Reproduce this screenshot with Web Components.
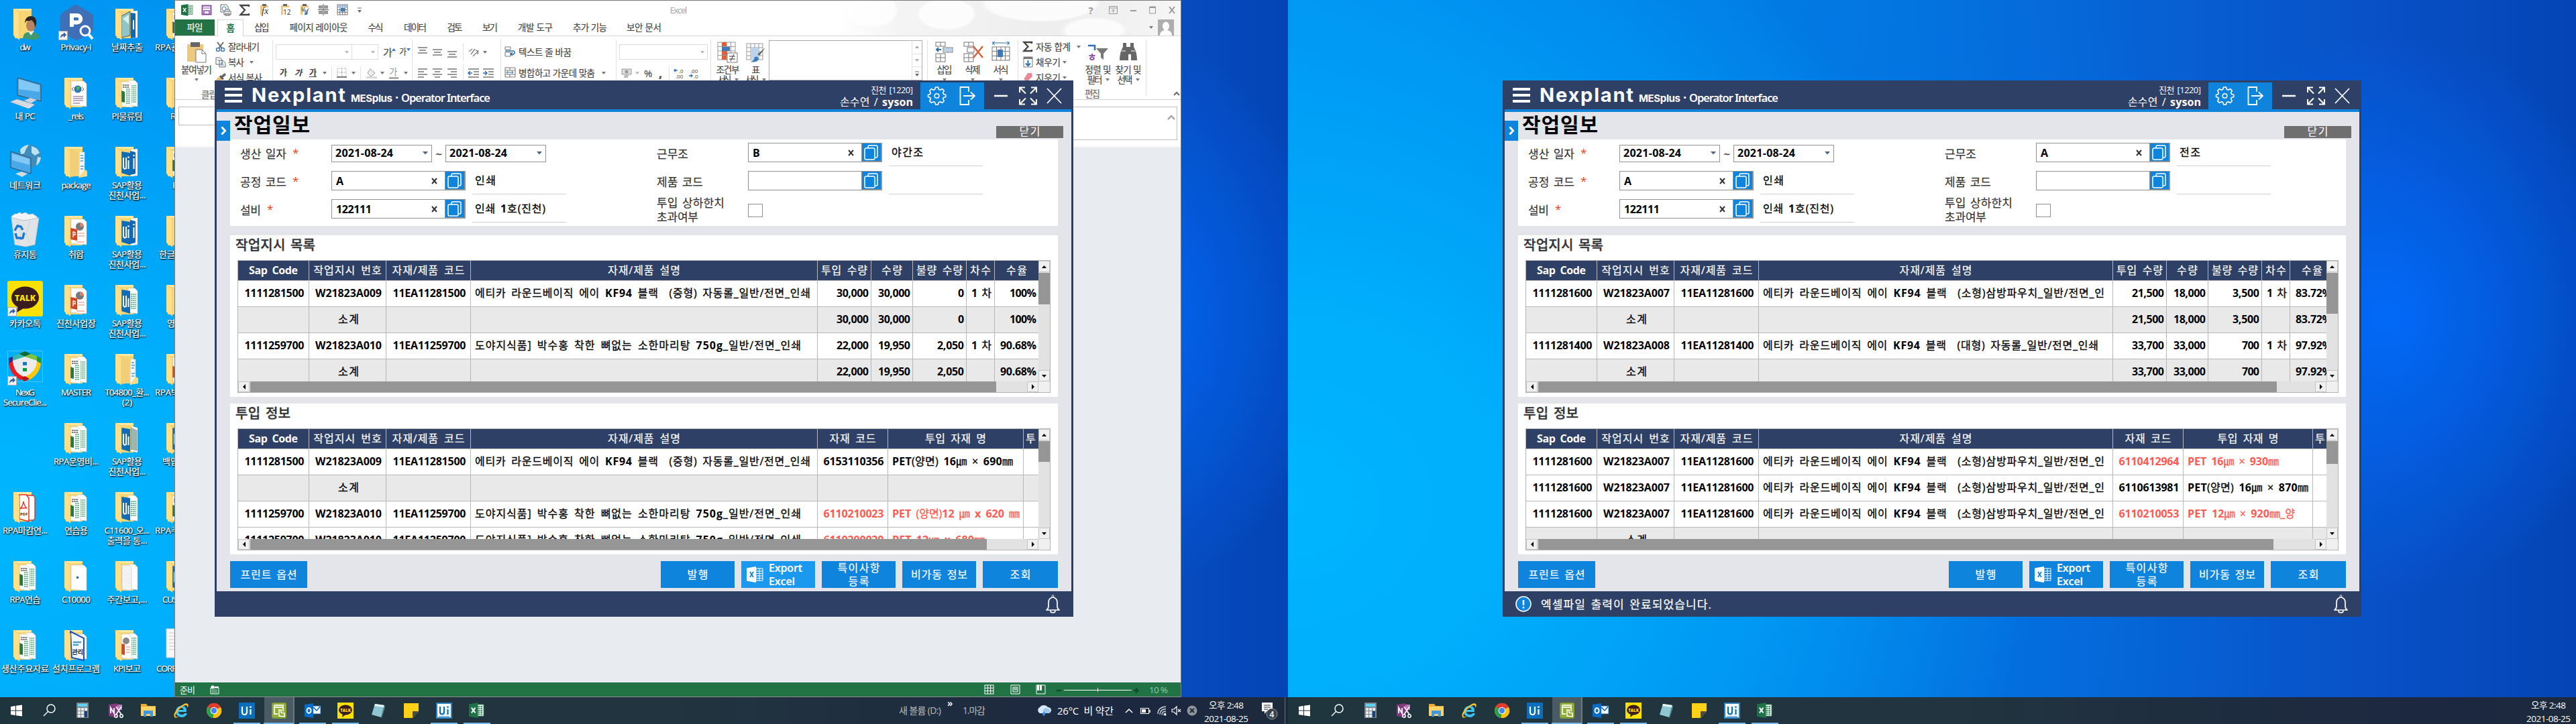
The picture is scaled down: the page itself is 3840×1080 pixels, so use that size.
<!DOCTYPE html>
<html lang="ko">
<head>
<meta charset="utf-8">
<title>Desktop</title>
<style>
html,body{margin:0;padding:0;width:3840px;height:1080px;overflow:hidden;background:#0078d7}
body{font-family:'Open Sans','Noto Sans CJK KR',sans-serif}
.screens{display:flex;width:3840px;height:1080px}
</style>
</head>
<body>
<div class="screens">
  <desk-screen kind="left"></desk-screen>
  <desk-screen kind="right"></desk-screen>
</div>
<script>
/* ---------- helpers ---------- */
class BaseEl extends HTMLElement{
  connectedCallback(){
    if(this.shadowRoot) return;
    this.attachShadow({mode:'open'}).innerHTML=this.render();
  }
}
/* text whose letter-spacing is tuned so that it fills the width w */
class FitText extends HTMLElement{
  connectedCallback(){
    if(this.shadowRoot) return;
    this.attachShadow({mode:'open'}).innerHTML='<style>:host{display:inline-block;flex:none;white-space:pre}</style><slot></slot>';
    const w=+this.getAttribute('w'); if(!w) return;
    const r=document.createRange(); r.selectNodeContents(this);
    const nat=r.getBoundingClientRect().width, n=[...this.textContent].length;
    if(nat){ this.style.letterSpacing=((w-nat)/Math.max(1,n-(n>1?1:0))).toFixed(3)+'px'; this.style.width=w+'px'; }
  }
}
customElements.define('fit-text',FitText);
const T=(t,w,style='')=>`<fit-text w="${w}" style="${style}">${t}</fit-text>`;
/* Hangul at normal weight, Latin letters and digits bold */
const M=(t,w,style='')=>`<fit-text w="${w}" style="${style}">${t.replace(/[A-Za-z0-9][A-Za-z0-9.,%\-]*/g,m=>`<span style="font-weight:700;-webkit-text-stroke:0">${m}</span>`)}</fit-text>`;
const S=(w,h,body,vb)=>`<svg width="${w}" height="${h}" viewBox="${vb||`0 0 ${w} ${h}`}" style="display:block;flex:none;overflow:visible">${body}</svg>`;

/* ---------- desktop icons ---------- */
const folderBack='<path d="M20 13h27v44H22z" fill="#f7d774"/><path d="M20 13h27v3H21z" fill="#ffe9a0"/>';
const folderFront='<path d="M20 13l9 5.500v41L20 53z" fill="#ffe08a"/><path d="M20 13l9 5.500v41" fill="none" stroke="#e8c060" stroke-width=".6"/>';
const page=(x,y,w,h,f='#fff')=>`<path d="M${x} ${y}h${w-4}l4 4v${h-5}l-${w} -2z" fill="${f}" stroke="#c8c8c8" stroke-width=".6"/>`;
const lines=(x,y,n,c,w=9)=>Array.from({length:n},(_,i)=>`<path d="M${x} ${y+i*3}h${w}" stroke="${c}" stroke-width="1.400" stroke-dasharray="2.500 .7"/>`).join('');
const sheetsX=page(39,17,14,40)+lines(43,25,9,'#4fa678',8)+page(29,19,15,39)+lines(31,24,2,'#555',10)+lines(36,30,8,'#4fa678',6)+'<path d="M29 32l5 2v16l-5-1z" fill="#1f7a45"/>';
const ui='<path d="M43 17l10-1v40l-10 1z" fill="#fff"/><path d="M42 19l8 2v32l-8 2z" fill="#1268b0"/><path d="M47.500 30v16" stroke="#fff" stroke-width="2"/><circle cx="47.500" cy="26" r="1.300" fill="#fff"/><path d="M29 20l13 2v34l-13-4z" fill="#0e6cb8"/><path d="M32 29v13q0 4 3 4M36 29v17M39.500 33v13" stroke="#fff" stroke-width="2" fill="none"/><circle cx="39.500" cy="28.500" r="1.300" fill="#fff"/>';
const F=inner=>folderBack+inner+folderFront;
const shortcut='<rect x="11.500" y="46.500" width="13" height="13" fill="#f2f2f2" stroke="#aaa"/><path d="M14 57q0-6 5-6.500v-2.500l4 4-4 4v-2.500q-3 0-5 3.500z" fill="#2f5fa8"/>';
const DI={
 folder:F(page(33,19,18,38)),
 user:folderBack+folderFront+'<path d="M34 57q1-9 9-9h5q9 0 11 8-5 4-14 3z" fill="#3f9a6d"/><path d="M42 46l4 7 5-7z" fill="#e8f2ea"/><ellipse cx="46" cy="38" rx="7" ry="9" fill="#b98560"/><path d="M37 33q1-9 10-9 8 1 7 11l-2 7q0-9-5-12-5 2-8 1l-1 3z" fill="#2b2420"/>',
 privacy:'<path d="M37 7l21 12q4 2 4 5v20q0 3-4 5L40 59q-3 2-6 0L16 49q-3-2-3-5V24q0-3 3-5L33 8q2-1 4-1z" transform="translate(1 0)" fill="#3f70b7"/><path d="M31 40V23h8a5 5 0 0 1 0 10.500h-8" fill="none" stroke="#fff" stroke-width="6"/><circle cx="51" cy="46" r="7" fill="#3f70b7" stroke="#fff" stroke-width="3"/><path d="M56 51l6 7" stroke="#fff" stroke-width="4"/>'+shortcut,
 pc:'<path d="M26 13l35 10v25l-35-9z" fill="#49a9e8" stroke="#445" stroke-width="1"/><path d="M28 15l31 9v10L28 30z" fill="#80c8f5"/><path d="M36 47l9-4 10 3-9 5z" fill="#ccd4da"/><path d="M15 49l10-4 27 8-9 6z" fill="#e6eaec" stroke="#99a" stroke-width=".7"/><path d="M19 49l26 7M22 47l26 7" stroke="#aab" stroke-width=".7"/>',
 net:'<circle cx="44" cy="27" r="17" fill="#3d8ebc"/><path d="M30 17q6-7 13-7l-4 6-3 7-5 1zM47 12q9 2 12 10l-7 4-5-4zM56 28l5 1q-1 8-7 12z" fill="#bfe3ee"/><path d="M16 20l30 10v23l-30-9z" fill="#49a9e8" stroke="#445" stroke-width="1"/><path d="M18 23l26 8v9L18 33z" fill="#80c8f5"/><path d="M23 53l9-3 9 3-8 5z" fill="#d3dadf"/>',
 trash:'<path d="M17 14q5-5 9-4 3-4 6 0l6-2 5 3 6-1 7 5-3 5H18z" fill="#f1f3f4" stroke="#c3c8cc" stroke-width=".7"/><path d="M17 16l19 4 22-4-6 40-14 3-16-3z" fill="#dfe4e7" stroke="#b9c2c8"/><path d="M26 20l5 20-4 14M45 20l-6 20 6 14" stroke="#c9d0d4" fill="none"/><path d="M22 35l4-7 5 1 3 5M23 39l2 7h6M36 38l-2 8-4 1" stroke="#1a78cf" stroke-width="3.400" fill="none"/>',
 talk:'<rect x="11" y="7" width="53" height="53" rx="3" fill="#fbe100"/><ellipse cx="37.500" cy="32" rx="20.500" ry="16.500" fill="#3a1d1e"/><path d="M27 42l-2 12 10-6z" fill="#3a1d1e"/><text x="37.500" y="36.500" font-family="Open Sans" font-weight="800" font-size="12" fill="#fbe100" text-anchor="middle" textLength="31">TALK</text>'+shortcut,
 shield:'<rect x="11.500" y="8.500" width="52" height="46" fill="none" stroke="#4ac0ff"/><path d="M37 10L13 20q0 26 24 33 24-7 24-33z" fill="#ececec"/><path d="M37 9l-9 4 9 4 9-4z" fill="#0b6b3a"/><path d="M28 13l-9 3v7l18-6z" fill="#35b8b0"/><path d="M46 13l9 3v7l-18-6z" fill="#7dc242"/><path d="M19 17l-6 2v10l6-5z" fill="#2b2e83"/><path d="M55 17l6 2v10l-6-5z" fill="#139a48"/><path d="M13 27q2 17 18 25l5-5Q21 42 19 24z" fill="#ec1c24"/><path d="M61 27q-2 17-18 25l-6-5q17-7 18-23z" fill="#fdc70c"/><path d="M31 50l6-4 7 4-7 4z" fill="#b5121b"/><rect x="34" y="25" width="6" height="5" fill="#1577c2"/><rect x="34" y="34" width="6" height="5" fill="#0a9a4a"/>'+shortcut,
 rels:F(page(30,18,23,39)+'<circle cx="40" cy="30" r="5.500" fill="#2b76b8"/><path d="M38 27q4-3 5 1l-4 5z" fill="#55b84d"/>'+'<path d="M34 27l-3 3 3 3M46 27l3 3-3 3" stroke="#666" fill="none"/>'+'<path d="M33 41h15M33 44h15M33 47h15M33 51h10" stroke="#758" stroke-width="1"/>'),
 pack:F('<path d="M43 21h7v34l-8 4z" fill="#f4f6f8" stroke="#ccc" stroke-width=".5"/><path d="M44 26h4M44 30h5M44 34h4M44 42h5M44 46h4" stroke="#4b9ad6" stroke-width="1.500"/><path d="M29 17l12 4v35l-11 2z" fill="#f0cf78"/><path d="M50 47l4 2v8l-13 2z" fill="#f9db82"/>'),
 ppt:F(page(30,18,23,39)+'<circle cx="43" cy="29" r="6" fill="#777"/><path d="M43 29v-6a6 6 0 0 1 6 6z" fill="#e2836d"/><path d="M29 31l10 2v17l-10-2z" fill="#d04626"/><path d="M41 39h9M41 43h9M38 52h12" stroke="#e2836d"/><path d="M33 45v-8l3 .5v4l-3-.5" fill="none" stroke="#fff" stroke-width="1.300"/>'),
 xl:F(sheetsX),
 ui:F(ui),
 photo:F('<path d="M43 17l10-1v40l-10 1z" fill="#fff"/><path d="M43 19l7 1v36l-7 1z" fill="#1268b0"/><path d="M47 30v14" stroke="#fff" stroke-width="2"/>'+'<path d="M29 24l13-7v36l-13 3z" fill="#8fc6c9" stroke="#555"/><path d="M31 28l9-6v14z" fill="#d7efef"/>'),
 uip:F('<path d="M44 18l9 2v37l-9-2z" fill="#fff"/><path d="M43 20l9 4v30l-9-2z" fill="#9ab7b3" stroke="#777" stroke-width=".5"/><path d="M29 20l13 2v34l-13-4z" fill="#0e6cb8"/><path d="M32 29v13q0 4 3 4M36 29v17M39.500 33v13" stroke="#fff" stroke-width="2" fill="none"/>'),
 uix:F(page(39,18,14,39)+lines(43,27,8,'#4fa678',8)+'<path d="M29 20l13 2v34l-13-4z" fill="#0e6cb8"/><path d="M32 29v13q0 4 3 4M36 29v17M39.500 33v13" stroke="#fff" stroke-width="2" fill="none"/>'),
 pdf:F('<rect x="36" y="18" width="16" height="37" rx="4" fill="#fff" stroke="#e3342b" stroke-width="1.500"/><path d="M29 17h10l4 5v35l-14-4z" fill="#fff" stroke="#e3342b" stroke-width="1.500"/><path d="M30 38q4-4 5-11 1 7 5 10-6-1-10 1z" fill="none" stroke="#e3342b" stroke-width="1.500"/><text x="30" y="48" font-size="6" font-weight="700" fill="#333" font-family="Open Sans">PDF</text>'),
 blank:F(page(30,19,23,39)+'<rect x="38" y="36" width="3" height="3" fill="#2f5f95"/>'),
 docs:F(page(39,18,14,39)+page(30,19,14,39,'#f3f3f3')+'<path d="M33 26l8 8M33 32l9 9M33 38l9 9" stroke="#ddd" stroke-width=".6"/>'),
 setup:F(page(36,19,17,38)+'<path d="M29 15l20 10v33l-18-4z" fill="#f5f8fb" stroke="#1f4fb0" stroke-width="2"/><path d="M33 31h12M33 35h8" stroke="#4ca0c9" stroke-width="2.500"/><text x="31.500" y="49" font-size="9" font-weight="700" fill="#222" font-family="Noto Sans CJK KR">관리</text>'),
 kpi:F(page(40,18,13,39)+lines(43,25,9,'#4fa678',8)+page(29,19,15,38)+'<circle cx="36" cy="29" r="5" fill="#888"/><path d="M29 33l5 1v16l-5-1z" fill="#d04626"/><path d="M36 38h6M36 42h6M36 46h6" stroke="#e2836d"/>'),
 doc:'<path d="M20 11h30v43H20z" fill="#f7f7f7" stroke="#ccc"/><path d="M24 17h22M24 22h22M24 27h22M24 32h22M24 37h22M24 42h22" stroke="#c9c9c9"/>'
};
class DeskIcon extends BaseEl{
  render(){
    const k=this.getAttribute('kind'), rows=(this.getAttribute('label')||'').split('|').map(s=>s.split('~'));
    const off=this.getAttribute('off');
    return `<style>:host{display:flex;flex-direction:column;width:76px;height:103px;overflow:visible}
    .l{display:flex;flex-direction:column;align-items:${off?'flex-start':'center'};width:75px;margin-left:${off||0}px;font:400 13px/15px 'Open Sans','Noto Sans CJK KR',sans-serif;color:#fff;-webkit-text-stroke:.2px #fff;text-shadow:1px 1px 2px #000,0 1px 2px rgba(0,0,0,.8);margin-top:1px}</style>
    ${k?S(76,62,DI[k]):''}<div class="l">${rows.map(r=>r[0]?T(r[0],r[1]):'').join('')}</div>`;
  }
}
customElements.define('desk-icon',DeskIcon);

class IconGrid extends BaseEl{
  render(){
    const sa='SAP활용~45|진천사업...~56';
    const c=[
     [['user','dw~16'],['pc','내 PC~30'],['net','네트워크~47'],['trash','휴지통~35'],['talk','카카오톡~47'],['shield','NexG~29|SecureClie...~65'],['',''],['pdf','RPA마감연...~67'],['xl','RPA연습~46'],['xl','생산주요자료~71']],
     [['privacy','Privacy-i~46'],['rels','_rels~23'],['pack','package~44'],['ppt','취합~23'],['ppt','진천사업장~59'],['xl','MASTER~45'],['xl','RPA운영비...~67'],['xl','연습용~35'],['blank','C10000~43'],['setup','설치프로그램~71']],
     [['photo','날짜추출~47'],['xl','PI물류팀~46'],['ui',sa],['ui',sa],['uix',sa],['pack','T04800_환...~66|(2)~15'],['uip',sa],['uix','C11600_오...~68|출력을 통...~60'],['docs','주간보고,...~60'],['kpi','KPI보고~41']],
     [['xl','RPA관~36','3'],['folder','R~8','26'],['xl','E~7','29'],['folder','한글~24','9'],['folder','영~12','21'],['ppt','RPA박~36','3'],['uip','백업~24','14'],['xl','RPA주~36','3'],['ui','CUS~23','14'],['doc','CORP~31','5']]
    ];
    return `<style>:host{display:flex;width:304px;height:1030px}.c{display:flex;flex-direction:column;width:76px}</style>`+
      c.map(col=>`<div class="c">${col.map(i=>`<desk-icon kind="${i[0]}" label="${i[1]}" ${i[2]?`off="${i[2]}"`:''}></desk-icon>`).join('')}</div>`).join('');
  }
}
customElements.define('icon-grid',IconGrid);

/* ---------- task bar ---------- */
const excelIco=(s=1)=>`<g transform="scale(${s})"><path d="M12 3h11v18H12z" fill="#fff" stroke="#217346"/><path d="M14 6h7M14 9h7M14 12h7M14 15h7M14 18h7" stroke="#217346" stroke-width="1.800" stroke-dasharray="3 1"/><path d="M0 2.500L14 0v24L0 21.500z" fill="#1e7145"/><path d="M4 8l6 8M10 8l-6 8" stroke="#fff" stroke-width="2"/></g>`;
const TB={
 win:'<path d="M3 6l7-1v6.500H3zM11 4.800L20 3.500v8h-9zM3 12.500h7V19l-7-1zM11 12.500h9v8l-9-1.300z" fill="#fff"/>',
 search:'<circle cx="14" cy="9" r="6" fill="none" stroke="#fff" stroke-width="1.500"/><path d="M10 13l-7 7" stroke="#fff" stroke-width="1.500"/>',
 calc:'<rect x="3" y="0" width="18" height="23" fill="#7d858f"/><rect x="5" y="2" width="14" height="4" fill="#5ed3f5"/><path d="M5 8h4v4H5zM10 8h4v4h-4zM15 8h4v4h-4zM5 13h4v4H5zM10 13h4v4h-4zM5 18h4v4H5zM10 18h4v4h-4z" fill="#e8eaec"/><path d="M15 13h4v9h-4z" fill="#15447c"/>',
 one:'<path d="M2 3l13-2v22L2 20z" fill="#80397b"/><path d="M15 3h7v8h-7z" fill="#b977b4"/><path d="M5 16V8l5 8V8" stroke="#fff" stroke-width="1.800" fill="none"/><path d="M13 6l8 12M21 6l-8 12" stroke="#f3e8f2" stroke-width="2"/><circle cx="13" cy="20" r="2.200" fill="none" stroke="#fff" stroke-width="1.500"/><circle cx="21" cy="20" r="2.200" fill="none" stroke="#fff" stroke-width="1.500"/>',
 dir:'<path d="M1 2h8l2 3h12v15H1z" fill="#e6a93a"/><path d="M1 6h22v14H1z" fill="#ffd363"/><path d="M5 12h14v9h-4v-4h-6v4H5z" fill="#3f98e0"/>',
 ie:'<path d="M20 14H8q1 4 5 4 3 0 4-2h4q-2 6-8.500 6Q4 21 4 13 5 5 12.500 5 21 5 20 14zM8 11h8q-1-3-4-3-3 0-4 3z" fill="#3cc0f0"/><path d="M2 22Q-1 16 9 7 19-1 22 2q2 2-1 6 1-4-2-4Q12 5 6 14q-4 6-2 7 2 1 5-1-4 4-7 2z" fill="#f7c231"/>',
 chrome:'<circle cx="12" cy="12" r="11" fill="#fbc116"/><path d="M12 12L2.500 6.500A11 11 0 0 1 22 7z" fill="#e33b2e"/><path d="M12 12L2.500 6.500A11 11 0 0 0 11 23z" fill="#2aa14c"/><path d="M12 12l10-5A11 11 0 0 1 11 23z" fill="#fbc116"/><circle cx="12" cy="12" r="5.300" fill="#fff"/><circle cx="12" cy="12" r="4.200" fill="#4285f4"/>',
 ui:'<rect x="0" y="0" width="24" height="24" fill="#0a6ebd"/><path d="M5 6v8q0 4 3.500 4t3.500-4V6M17.500 10v8" stroke="#fff" stroke-width="2.200" fill="none"/><rect x="16.300" y="5.500" width="2.400" height="2.400" fill="#fff"/>',
 green:'<rect x="1" y="0" width="22" height="24" rx="3" fill="#7e9a2e"/><rect x="2" y="1" width="20" height="21" rx="2" fill="#93ad3c"/><path d="M5 4h13v9M5 4v13h5M5 7h13" stroke="#f2f5e2" stroke-width="1.800" fill="none"/><path d="M12 20V11h3v4l5 1v5z" fill="none" stroke="#fff" stroke-width="1.500"/>',
 outlook:'<path d="M12 5h12v12H12z" fill="#f4f8fc" stroke="#0a64ad"/><path d="M13 7l5 5 5-6" stroke="#0a64ad" stroke-width="1.500" fill="none"/><path d="M0 3l13-2v22L0 21z" fill="#0a6cc4"/><ellipse cx="6.500" cy="12" rx="3" ry="3.800" fill="none" stroke="#fff" stroke-width="2"/>',
 talk:'<rect width="24" height="24" fill="#fbe100"/><ellipse cx="12" cy="11" rx="10" ry="7.500" fill="#3a1d1e"/><path d="M8 16l-1 6 5-4z" fill="#3a1d1e"/><text x="12" y="13.500" font-size="6" font-weight="800" fill="#fbe100" text-anchor="middle" font-family="Open Sans">TALK</text>',
 note:'<path d="M7 2l14 2-5 18-14-4z" fill="#8ec7d1"/><path d="M7 2l14 2-1 3-14-2z" fill="#e6f2f4"/><path d="M16 22l5-18 1 3-5 16z" fill="#4f8791"/>',
 sticky:'<path d="M1 1h22v12L14 23H1z" fill="#fcd116"/><path d="M23 13h-9v10z" fill="#4a4a43"/>',
 uiw:'<rect x="1" y="1" width="22" height="22" fill="#fff" stroke="#2b84c6" stroke-width="2"/><path d="M6 6v8q0 3.500 3 3.500t3-3.500V6M17.500 10v8" stroke="#0a6ebd" stroke-width="2.200" fill="none"/><rect x="16.300" y="5.500" width="2.400" height="2.400" fill="#0a6ebd"/><path d="M4 21h16" stroke="#0a6ebd"/>',
 excel:excelIco(.96)
};
class TaskBar extends BaseEl{
  render(){
    const left=this.getAttribute('kind')==='left';
    const on={ui:1,green:2,outlook:1,talk:1,uiw:1,excel:1};
    const items=['win','search','calc','one','dir','ie','chrome','ui','green','outlook','talk','note','sticky','uiw','excel'];
    const tray=left?`
      ${T('새 볼륨 (D:)',63,'color:#b4bbc0;margin-right:9px')}${T('»',9,'color:#fff;font-weight:600;font-size:15px;margin:-24px 14px 0 0')}${T('1.마감',34,'color:#b4bbc0;margin-right:76px')}
      ${S(22,20,'<path d="M5 14a5 5 0 0 1 0-9 7 6 0 0 1 12 0 4.500 4.500 0 0 1 1 9z" fill="#d8e9f8"/><path d="M12 14a4 4 0 0 1 4-7 4 4 0 0 1 3 7z" fill="#9cc8ee"/><path d="M11 11q4 5 0 7-4-2 0-7z" fill="#2f8fe8"/>')}
      ${T('26°C  비 약간',84,'color:#fff;font-size:15px;margin-left:9px;margin-right:16px')}
      ${S(14,20,'<path d="M2 13l5-5 5 5" stroke="#fff" stroke-width="1.500" fill="none"/>')}
      <i style="width:9px"></i>${S(18,20,'<rect x="1.500" y="6.500" width="12" height="8" fill="none" stroke="#fff"/><rect x="3" y="8" width="6" height="5" fill="#fff"/><path d="M15 9v4" stroke="#fff" stroke-width="1.500"/>')}
      <i style="width:8px"></i>${S(16,20,'<path d="M1 15Q1 5 13 4M4 16Q4 8 13 7.500M7 16.500Q7 11 13 11M10 17q0-3 3-3" stroke="#cfd6da" fill="none" stroke-width="1.300"/><circle cx="12" cy="16" r="1.500" fill="#fff"/>')}
      <i style="width:4px"></i>${S(18,20,'<path d="M2 8h3l4-4v12l-4-4H2z" fill="none" stroke="#fff" stroke-width="1.200"/><path d="M11 8l4 4M15 8l-4 4" stroke="#fff" stroke-width="1.200"/>')}
      <i style="width:6px"></i>${S(16,20,'<circle cx="8" cy="10" r="7.500" fill="#8d949b"/><path d="M5 7l6 6M11 7l-6 6" stroke="#222b3a" stroke-width="2"/>')}
      <i style="width:10px"></i>`:'';
    return `<style>:host{display:flex;width:1920px;height:40px;background:linear-gradient(90deg,#1f353d 0,#22343f 50%,#1c2740 90%,#1d2a3c 100%);font:400 14px/18px 'Open Sans','Noto Sans CJK KR',sans-serif;color:#fff}
    .b{width:49px;height:40px;display:flex;flex-direction:column;align-items:center;box-sizing:border-box;padding-top:8px}
    .b i{display:block;width:40px;height:2px;background:#76b9ed;margin-top:6px}.b.act{width:45px;background:#4a5b63;margin:0 2px;border-right:2px solid #6a787f}.b.act i{width:45px}
    .tray{margin-left:auto;display:flex;align-items:center;height:40px}.ck{display:flex;flex-direction:column;align-items:center;height:40px;padding-top:2px;box-sizing:border-box;line-height:20px;font-size:13.500px}
    .nt{width:34px;margin-left:15px}.end{border-left:1px solid #66707c;height:40px;width:4px;margin-left:5px}</style>
    ${items.map(n=>`<div class="b ${on[n]===2?'act':''}">${S(24,24,TB[n])}${on[n]?'<i></i>':''}</div>`).join('')}
    <div class="tray">${tray}<div class="ck" style="${left?'':'margin-right:8px'}">${T('오후 2:48',52)}${T('2021-08-25',66)}</div>
    ${left?`<div class="nt">${S(34,34,'<path d="M5 5h16v13h-9l-3 4v-4H5z" fill="#fff"/><path d="M8 9h10M8 12h10M8 15h6" stroke="#223" stroke-width="1.200"/><circle cx="20" cy="22" r="8" fill="#3a424b" stroke="#8c9298"/><text x="20" y="26.500" text-anchor="middle" font-size="12" fill="#fff" font-family="Open Sans" font-weight="600">4</text>')}</div><div class="end"></div>`:''}</div>`;
  }
}
customElements.define('task-bar',TaskBar);

/* ---------- Excel window ---------- */
const dn='<path d="M0 0h6l-3 4z" fill="#777"/>';
const arrow=(st='')=>`<svg width="6" height="4" style="display:block;flex:none;${st}">${dn}</svg>`;
const grid=(x,y,w,h,c,r,col='#777')=>{let s=`<rect x="${x}" y="${y}" width="${w}" height="${h}" fill="none" stroke="${col}"/>`;for(let i=1;i<c;i++)s+=`<path d="M${x+w*i/c} ${y}v${h}" stroke="${col}"/>`;for(let i=1;i<r;i++)s+=`<path d="M${x} ${y+h*i/r}h${w}" stroke="${col}"/>`;return s};
const clip='<path d="M3 2h12v14H3z" fill="#edc87e"/><rect x="6" y="0" width="6" height="3" fill="#666"/><path d="M6 5h10v12H6z" fill="#fff"/>';
class ExcelWindow extends BaseEl{
  render(){
    const qat=[
      S(18,18,excelIco(.74)),
      S(16,16,'<path d="M1.500 1.500h13v13h-13z" fill="#fff" stroke="#8a4fa8" stroke-width="2"/><path d="M4 9h8v5H4z" fill="#fff" stroke="#8a4fa8" stroke-width="1.500"/><path d="M3 5h10" stroke="#8a4fa8"/>'),
      S(18,18,'<path d="M1 1h8l3 3v8H1z" fill="#fff" stroke="#666"/><circle cx="6" cy="7" r="3" fill="none" stroke="#3d7ab8"/><path d="M6 11h10v5H6zM8 8h6v3M8 14h6v3H8z" fill="#fff" stroke="#666"/>'),
      S(18,18,'<path d="M15 4V2H2.500l6.500 7-6.500 7H15v-2" fill="none" stroke="#444" stroke-width="2.300"/>'),
      S(18,18,clip+'<text x="5" y="15" font-size="14" font-style="italic" font-family="Liberation Serif" fill="#333">fx</text>'),
      S(18,18,clip+'<text x="6" y="16" font-size="10" font-family="Open Sans" fill="#333">12</text>'),
      S(18,18,clip+'<text x="4" y="12" font-size="9" font-family="Open Sans" fill="#333">%</text><path d="M16 5l-5 6 2 3z" fill="#777"/><path d="M9 16q0-4 3-4l2 2q-1 3-5 2z" fill="#3d7ab8"/>'),
      S(18,18,'<path d="M2 2h6v5H2zM10 2h6v5h-6zM2 10h6v5H2zM10 10h6v5h-6z" fill="#999"/><path d="M9 0v17M1 8.500h16" stroke="#555"/>'),
      S(18,18,grid(1,1,15,15,4,4)+'<path d="M6 6h6v5H6z" fill="#3d7ab8"/><path d="M2 2h13v3H2z" fill="#a9c6e4"/>')];
    const qx=[270,300,328,356,385,416,445,472.500,501.500];
    let cur=261, q='';
    qat.forEach((a,i)=>{const w=i===1?16:18;q+=`<i style="width:${qx[i]-cur}px"></i>${a}`;cur=qx[i]+w;});
    const tabs=[['삽입',379,22.500],['페이지 레이아웃',431.500,87],['수식',548.500,23],['데이터',602,34],['검토',666.500,23],['보기',719,23],['개발 도구',772,52],['추가 기능',854,51],['보안 문서',934,52]];
    let tc=363,tt='';
    tabs.forEach(t=>{tt+=`<i style="width:${t[1]-tc}px"></i>${T(t[0],t[2])}`;tc=t[1]+t[2];});
    const al=(k)=>S(16,16,k==='l'?'<path d="M1 2h14M1 6h9M1 10h14M1 14h9" stroke="#777" stroke-width="1.300"/>':k==='c'?'<path d="M1 2h14M4 6h8M1 10h14M4 14h8" stroke="#777" stroke-width="1.300"/>':k==='r'?'<path d="M1 2h14M6 6h9M1 10h14M6 14h9" stroke="#777" stroke-width="1.300"/>':k==='t'?'<path d="M1 1h14M3 5h10M1 9h14" stroke="#777" stroke-width="1.300"/>':k==='m'?'<path d="M1 4h14M3 8h10M1 12h14" stroke="#777" stroke-width="1.300"/>':'<path d="M1 7h14M3 11h10M1 15h14" stroke="#777" stroke-width="1.300"/>');
    const g=w=>`<i style="width:${w}px"></i>`;
    const ind=(d)=>S(18,16,`<path d="M1 2h16M9 6h8M9 10h8M1 14h16" stroke="#777" stroke-width="1.300"/><path d="${d?'M1 8h6M4 5l3 3-3 3':'M7 8H1M4 5L1 8l3 3'}" stroke="#2f6fb0" stroke-width="1.500" fill="none"/>`);
    const big=(x,w,ico,a,aw,b,bw)=>`<div class="big" style="width:${w}px;margin-left:${x}px">${ico}${T(a,aw,'margin-top:2px')}${b?`<div class="r" style="height:14px">${T(b,bw)}${arrow('margin-left:4px')}</div>`:arrow('margin-top:5px')}</div>`;
    return `<style>
    :host{display:flex;flex-direction:column;box-sizing:border-box;width:1501px;height:1040px;background:#e8ebf0;border:1px solid #7d7d7d;border-top:1px solid #777;border-bottom:1px solid #8d8d8d;font:400 13.500px/16px 'Open Sans','Noto Sans CJK KR',sans-serif;color:#444;overflow:hidden}
    i{display:block;flex:none}.r{display:flex;align-items:center;flex:none}
    .top{display:flex;flex-direction:column;height:53px;flex:none;background:#fff;border-bottom:1px solid #d5d5d5;box-sizing:border-box;width:1499px}
    .title{height:28px;display:flex;align-items:center}.tabs{height:24px;display:flex;align-items:center}
    .tabs,.rib{-webkit-text-stroke:.15px #444}
    .file{width:59px;height:24px;background:#217346;color:#fff;-webkit-text-stroke:.15px #fff;display:flex;align-items:center;justify-content:center;margin-right:4px}
    .home{width:39px;height:25px;box-sizing:border-box;border:1px solid #d5d5d5;border-bottom:0;background:#fff;color:#217346;display:flex;align-items:center;justify-content:center;font-weight:600;-webkit-text-stroke:0}
    .rib{height:94px;flex:none;background:#fff;border-bottom:1px solid #d0d0d0;display:flex;align-items:flex-start}
    .sep{width:1px;background:#e1e1e1;height:62px;margin-top:5px;flex:none}
    .big{display:flex;flex-direction:column;align-items:center;padding-top:8px;box-sizing:border-box;flex:none}
    .col{display:flex;flex-direction:column;padding-top:4px;flex:none}.col .r{height:23px}
    .box{border:1px solid #dcdcdc;height:23px;box-sizing:border-box;display:flex;align-items:center;justify-content:flex-end;padding-right:4px;flex:none}
    .two{display:flex;flex-direction:column;flex:none}.two .r{height:31px}
    .fx{height:70px;background:#fff;flex:none;display:flex;padding:10px 5px 0 5px;box-sizing:border-box;justify-content:space-between}
    .nb{width:110px;height:28px;border:1px solid #bdbdbd;box-sizing:border-box}.fb{width:1200px;height:50px;border:1px solid #bdbdbd;box-sizing:border-box;display:flex;justify-content:flex-end;padding:10px 2px}
    .status{height:21px;background:#217346;margin-top:auto;display:flex;align-items:center;color:#fff;padding-left:7px}
    .gal{width:229px;height:60px;border:1px solid #ababab;box-sizing:border-box;display:flex;justify-content:flex-end;flex:none;margin-top:6px}
    .gs{width:14px;border-left:1px solid #e1e1e1;display:flex;flex-direction:column}.gs div{flex:1;display:flex;align-items:center;justify-content:center;border-bottom:1px solid #e1e1e1}
    </style>
    <div class="top" style="background:radial-gradient(ellipse 40px 26px at 1038px 14px,rgba(255,255,255,.8) 90%,transparent),radial-gradient(ellipse 44px 24px at 1150px 20px,rgba(255,255,255,.8) 90%,transparent),radial-gradient(ellipse 90px 30px at 1290px 2px,rgba(255,255,255,.8) 90%,transparent),radial-gradient(ellipse 50px 20px at 1370px 44px,rgba(255,255,255,.8) 80%,transparent),linear-gradient(90deg,#fff 0,#fff 990px,#f4f4f4 1080px,#eee 1300px,#f0f0f0 1400px,#f6f6f6 1499px)">
      <div class="title">${q}${g(12)}${S(8,12,'<path d="M1 3h6" stroke="#666"/><path d="M1 6h6l-3 4z" fill="#666"/>')}
        ${g(459)}${T('Excel',26,'color:#a5a5a5')}${g(1621-1023)}
        <div class="r">${T('?',8,'color:#999;font-weight:700;font-size:15px')}${g(20)}${S(16,16,'<path d="M2.500 2.500h12v11h-12zM2 5h12M8.500 12V7M6 9.500l2.500-2.500 2.500 2.500" fill="none" stroke="#999"/>')}${g(14)}${S(16,16,'<path d="M4 9h9" stroke="#999" stroke-width="2"/>')}${g(13)}${S(16,16,'<path d="M3.500 3h9v10h-9z" fill="none" stroke="#999"/><path d="M3 4h10" stroke="#999" stroke-width="2"/>')}${g(14)}${S(14,16,'<path d="M3 3l8 10M11 3L3 13" stroke="#999" stroke-width="2"/>')}</div>
      </div>
      <div class="tabs"><div class="file">${T('파일',24)}</div><div class="home">${T('홈',12)}</div>${tt}${g(1713-986)}${arrow()}${g(7)}${S(24,24,'<rect width="24" height="24" fill="#aeaeae"/><ellipse cx="12" cy="10" rx="5" ry="6.500" fill="#fff"/><path d="M3 24q0-7 7-8h4q7 1 7 8z" fill="#fff"/>')}</div>
    </div>
    <div class="rib">
      <div class="big" style="width:50px;margin-left:7px">${S(30,32,'<path d="M1 4h24v26H1z" fill="#edc87e"/><path d="M6 1h14v7H6z" fill="#666"/><path d="M14 12h9l6 6v13H14z" fill="#fff" stroke="#777"/><path d="M23 12v6h6" fill="none" stroke="#777"/>')}${T('붙여넣기',46,'margin-top:2px')}${arrow('margin-top:5px')}
        <div style="display:flex;padding:12px 0 0 38px;color:#777">${T('클립',24)}</div></div>
      <div class="col" style="width:82px;margin-left:3px;margin-right:3px">
        <div class="r">${S(16,16,'<path d="M3 1l7 9M12 1L5 10" stroke="#666" stroke-width="2"/><circle cx="4" cy="12" r="2.500" fill="none" stroke="#3d7ab8" stroke-width="1.500"/><circle cx="11" cy="12" r="2.500" fill="none" stroke="#3d7ab8" stroke-width="1.500"/>')}${g(3)}${T('잘라내기',47)}</div>
        <div class="r">${S(16,16,'<path d="M1 1h6l3 3v7H1zM6 5h5l4 4v6H6z" fill="#fff" stroke="#666"/><path d="M8 9h4M8 12h5M3 5h3" stroke="#3d7ab8"/>')}${g(3)}${T('복사',24)}${g(8)}${arrow()}</div>
        <div class="r">${S(16,16,'<path d="M9 5l5-4 2 3-5 4z" fill="#666"/><path d="M8 4l5 6-3 1-4-5z" fill="#555"/><path d="M6 6l4 6-5 4-5-4z" fill="#e8b973"/>')}${g(3)}${T('서식 복사',51)}</div>
      </div>
      <i class="sep"></i>
      <div class="two" style="width:206px;margin-left:4px;padding-top:8px">
        <div class="r"><div class="box" style="width:114px">${arrow('opacity:.5')}</div><div class="box" style="width:40px;margin-left:-1px">${arrow('opacity:.5')}</div>${g(7)}${T('가',13,'font-size:15px')}${S(6,16,'<path d="M0 6l3-4 3 4z" fill="#3d7ab8"/>')}${g(5)}${T('가',11,'font-size:12px')}${S(6,16,'<path d="M0 2h6l-3 4z" fill="#3d7ab8"/>')}</div>
        <div class="r">${g(6)}${T('가',10,'font-weight:700;font-size:12px')}${g(12)}${T('가',10,'font-style:italic;font-weight:700;font-size:12px')}${g(12)}${T('가',11,'text-decoration:underline;font-weight:700;font-size:12px')}${g(9)}${arrow()}${g(14)}<i style="width:1px;height:20px;background:#e1e1e1;margin-right:7px;margin-left:-7px"></i>${S(15,15,'<path d="M1 1h13v12H1zM1 7h13M7.500 1v12" stroke="#888" stroke-dasharray="1 1.500" fill="none"/><path d="M0 14h15" stroke="#555" stroke-width="1.500"/>')}${g(7)}${arrow()}${g(7)}<i style="width:1px;height:20px;background:#e1e1e1;margin-right:8px"></i>${S(16,16,'<path d="M6 2l7 6-6 5-5-5z" fill="#eee" stroke="#999"/><path d="M0 13h16v3H0z" fill="#dcd6d6"/>')}${g(5)}${arrow()}${g(7)}${T('가',14,'color:#999;-webkit-text-stroke:0;border-bottom:3px solid #aaa;line-height:15px')}${g(8)}${arrow()}</div>
      </div>
      <i class="sep" style="margin-left:-3px"></i>
      <div class="two" style="width:127px;padding-top:8px;margin-left:7px">
        <div class="r">${al('t')}${g(6)}${al('m')}${g(6)}${al('b')}${g(8)}<i style="width:1px;height:26px;background:#e1e1e1;margin-right:7px"></i>${S(18,18,'<path d="M1 8l5-4M4 12l6-8M7 15l8-8M11 6l4 1-1 5" stroke="#888" stroke-width="1.500" fill="none"/>')}${g(4)}${arrow()}</div>
        <div class="r">${al('l')}${g(6)}${al('c')}${g(6)}${al('r')}${g(8)}<i style="width:1px;height:26px;background:#e1e1e1;margin-right:6px"></i>${ind(0)}${g(4)}${ind(1)}</div>
      </div>
      <i class="sep" style="margin-left:-3px"></i>
      <div class="two" style="width:163px;padding-top:8px;margin-left:5px">
        <div class="r">${S(17,17,'<path d="M1 1h8v4H1zM1 9h8v6H1z" fill="none" stroke="#777"/><path d="M1 7h13q3 3-1 5h-3M12 9l-3 3 3 2" fill="none" stroke="#2f6fb0" stroke-width="1.500"/>')}${g(4)}${T('텍스트 줄 바꿈',79)}</div>
        <div class="r">${S(17,17,'<path d="M1 1h15v14H1zM1 5h15M1 11h15M8 1v4M8 11v4" fill="none" stroke="#777"/><path d="M3 8h10M5 6L3 8l2 2M11 6l2 2-2 2" stroke="#2f6fb0" fill="none"/>')}${g(4)}${T('병합하고 가운데 맞춤',114)}${g(10)}${arrow()}</div>
      </div>
      <i class="sep" style="margin-left:3px"></i>
      <div class="two" style="width:142px;padding-top:8px;margin-left:4px">
        <div class="r"><div class="box" style="width:132px">${arrow('opacity:.5')}</div></div>
        <div class="r">${g(3)}${S(16,16,'<path d="M1 2h14v8H1z" fill="#ddd" stroke="#999"/><circle cx="8" cy="6" r="2.500" fill="#999"/><path d="M5 12h6M4 14h6" stroke="#bbb" stroke-width="2"/>')}${g(5)}${arrow('opacity:.5')}${g(7)}${T('%',13,'font-size:15px')}${g(9)}${T(',',6,'font-weight:700;font-size:18px')}${g(9)}<i style="width:1px;height:22px;background:#e1e1e1;margin-right:6px"></i>${S(17,16,'<path d="M6 4H1M3 2L1 4l2 2" stroke="#2f6fb0" stroke-width="1.400" fill="none"/><text x="8" y="7.500" font-size="8" fill="#444" font-family="Open Sans">.0</text><text x="3" y="15.500" font-size="8" fill="#444" font-family="Open Sans">.00</text>')}${g(5)}${S(17,16,'<text x="3" y="7.500" font-size="8" fill="#444" font-family="Open Sans">.00</text><path d="M1 12h5M4 10l2 2-2 2" stroke="#2f6fb0" stroke-width="1.400" fill="none"/><text x="8" y="15.500" font-size="8" fill="#444" font-family="Open Sans">.0</text>')}</div>
      </div>
      <i class="sep" style="margin-left:-6px"></i>
      ${big(5,40,S(32,32,grid(1,1,26,26,4,4,'#999')+'<path d="M7 1h7v6H7zM7 21h7v6H7z" fill="#d8623f"/><path d="M7 8h12v6H7z" fill="#3d7ab8"/><path d="M7 14h8v6H7z" fill="#d8623f"/><rect x="15" y="17" width="15" height="14" fill="#fff" stroke="#777"/><path d="M18 22h9M18 26h9M25 19l-5 10" stroke="#333"/>'),'조건부',35,'서식',21)}
      ${big(2,38,S(32,32,grid(3,3,24,24,4,4,'#999')+'<path d="M9 9h12v18H9z" fill="#bcd3ea"/><path d="M31 9l-9 12-3-2z" fill="#666"/><path d="M8 30q6 0 7-7 5-2 6 3-2 6-13 4z" fill="#3d7ab8"/>'),'표',11,'서식',21)}
      <div class="gal" style="margin-left:1px"><div class="gs"><div>${S(6,4,'<path d="M0 4h6l-3-4z" fill="#aaa"/>')}</div><div>${arrow('opacity:.6')}</div><div style="border:0">${S(8,10,'<path d="M1 2h6" stroke="#666"/><path d="M1 5h6l-3 4z" fill="#666"/>')}</div></div></div>
      <i class="sep" style="margin-left:7px"></i>
      ${big(4,42,S(32,32,grid(3,1,14,6,2,1)+grid(3,18,14,12,2,2)+grid(14,9,14,7,2,1)+'<path d="M15 10h12v5H15z" fill="#bcd3ea"/><path d="M11 12H4M7 9l-3 3 3 3" stroke="#2f6fb0" stroke-width="2" fill="none"/>'),'삽입',23,'',0)}
      ${big(0,42,S(32,32,grid(3,1,14,6,2,1)+grid(3,18,14,12,2,2)+grid(8,9,10,7,1,1)+'<path d="M17 7l14 17M31 7L17 24" stroke="#d8623f" stroke-width="2.500"/>'),'삭제',23,'',0)}
      ${big(0,42,S(32,32,grid(3,8,26,20,4,3)+'<path d="M11 12h8v11h-8z" fill="#3d7ab8"/><path d="M4 2h24M4 0v5M28 0v5M7 0L4 2l3 3M25 0l3 2-3 3" stroke="#2f6fb0" fill="none"/>'),'서식',23,'',0)}
      <i class="sep" style="margin-left:4px"></i>
      <div class="col" style="margin-left:6px;width:86px">
        <div class="r">${S(17,17,'<path d="M14 4V2H2.500l6 6.500-6 6.500H14v-2" fill="none" stroke="#444" stroke-width="2.300"/>')}${g(3)}${T('자동 합계',52)}${g(9)}${arrow()}</div>
        <div class="r">${S(17,17,'<path d="M2 1h13v15H2z" fill="#fff" stroke="#777"/><path d="M2 1h13v3H2z" fill="#777"/><path d="M8.500 6v8M5 10.500l3.500 3.500 3.500-3.500" stroke="#2f6fb0" stroke-width="2" fill="none"/>')}${g(3)}${T('채우기',37)}${g(3)}${arrow()}</div>
        <div class="r">${S(17,17,'<path d="M8 2l6 0 1 5-8 8-5-4z" fill="#e8899a"/><path d="M7 16h8" stroke="#777"/>')}${g(3)}${T('지우기',37)}${g(3)}${arrow()}</div>
      </div>
      <div class="big" style="width:42px;margin-left:6px">${S(32,32,'<path d="M1 6h10v7" stroke="#2f6fb0" stroke-width="2.500" fill="none"/><text x="0" y="29" font-size="15" fill="#8a4fa8" style="-webkit-text-stroke:0" font-weight="700" font-family="Noto Sans CJK KR">ㅎ</text><path d="M13 10h18l-7 8v9l-4-3v-6z" fill="#777"/>')}${T('정렬 및',39,'margin-top:2px')}<div class="r" style="height:14px">${T('필터',23)}${arrow('margin-left:4px')}</div><div style="color:#777;padding-top:6px;align-self:flex-start;margin-left:1px">${T('편집',23)}</div></div>
      <div class="big" style="width:42px;margin-left:3px">${S(32,32,'<path d="M8 2h5v6h6V2h5v6q5 8 5 20h-9v-9h-4v9H3Q3 16 8 8z" fill="#666"/><path d="M6 14h6M20 14h6" stroke="#fff"/>')}${T('찾기 및',39,'margin-top:2px')}<div class="r" style="height:14px">${T('선택',23)}${arrow('margin-left:4px')}</div></div>
      <i class="sep" style="margin-left:5px;height:84px"></i>
      ${g(40)}<div style="padding-top:82px">${S(10,7,'<path d="M1 6l4-4 4 4" stroke="#666" stroke-width="2" fill="none"/>')}</div>
    </div>
    <div class="fx"><div class="nb"></div><div class="fb">${S(12,9,'<path d="M1 8l5-5 5 5" stroke="#aaa" stroke-width="2.500" fill="none"/>')}</div></div>
    <div class="status">${T('준비',23,'font-size:13px')}${g(22)}${S(14,14,'<path d="M1 4h12v9H1z" fill="none" stroke="#fff"/><path d="M3 7h8M3 9h8M3 11h8" stroke="#fff" stroke-dasharray="1.500 1"/><circle cx="4" cy="3" r="2.500" fill="#fff"/><path d="M7 2h6v2H7z" fill="#fff"/>')}
      ${g(1467-327)}${S(15,15,grid(1,1,13,13,3,3,'#fff'))}${g(24)}${S(15,15,'<path d="M1 1h13v13H1zM4 4h7v7H4zM5 6h5M5 8h5" fill="none" stroke="#fff"/>')}${g(23)}${S(15,15,'<path d="M1 1h13v13H1z" fill="none" stroke="#fff"/><path d="M2 1h3v8H2zM6 1h3v8H6z" fill="#fff"/>')}
      ${g(16)}${S(124,14,'<path d="M0 8h7M115 8h8M119 4v8" stroke="#0f4d2a" stroke-width="2.500"/><path d="M11 7.500h101M61.500 4v6" stroke="#fff"/>')}${g(14)}${T('10 %',28,'color:#8fce9f')}</div>`;
  }
}
customElements.define('excel-window',ExcelWindow);

/* ---------- MES window ---------- */
const X='<path d="M1 1l7 8M8 1L1 9" stroke="#333" stroke-width="2"/>';
class CodeInput extends BaseEl{
  render(){
    const v=this.getAttribute('value')||'',w=this.getAttribute('w');
    return `<style>:host{display:flex;box-sizing:border-box;width:200px;height:29px;border:1px solid #929292;background:#fff;margin-bottom:3px;align-items:center;padding-left:6px;font:700 16px/26px 'Open Sans',sans-serif;color:#000;-webkit-text-stroke:0;flex:none}
    svg{flex:none}.b{width:30px;height:27px;background:#0f84dc;margin-left:11px;box-sizing:border-box;border:1px solid #8d9299;border-width:0 1px 1px 1px;display:flex;align-items:center;justify-content:center;flex:none}.x{margin-left:auto}</style>
    ${v?T(v,w):''}<div class="x">${v?S(9,10,X):''}</div><div class="b">${S(22,23,'<path d="M6 5V3q0-2 2-2h10q2 0 2 2v14q0 2-2 2h-1" fill="none" stroke="#fff" stroke-width="1.500"/><rect x="1" y="5" width="15" height="17" rx="2" fill="none" stroke="#fff" stroke-width="1.500"/>')}</div>`;
  }
}
customElements.define('code-input',CodeInput);
class DateInput extends BaseEl{
  render(){return `<style>:host{display:flex;box-sizing:border-box;width:150px;height:26px;border:1px solid #929292;background:#fff;align-items:center;justify-content:space-between;padding:0 5px 2px;font:700 16px/22px 'Open Sans',sans-serif;color:#000;flex:none}</style>${T(this.getAttribute('value'),86)}${S(8,6,'<path d="M0 1h8l-4 4.500z" fill="#4f6480"/>')}`}
}
customElements.define('date-input',DateInput);

class DataGrid extends BaseEl{
  render(){
    const d=DATA[this.getAttribute('win')][this.getAttribute('grid')];
    const cell=(c,i,h)=>{
      if(c===null||c===undefined||c==='') return `<div class="c" style="width:${d.cols[i]}px"></div>`;
      const [t,w,al,col]=c;
      const j=h?(al||'center'):al==='r'?'flex-end':al==='l'?'flex-start':'center';
      return `<div class="c" style="width:${d.cols[i]}px;justify-content:${j};${col?`color:${col};-webkit-text-stroke-color:${col}`:''}">${M(t,w)}</div>`;
    };
    return `<style>:host{display:flex;flex-direction:column;box-sizing:border-box;width:1212px;height:${d.h}px;border:1px solid #b4b4b4;margin-left:11px;background:#fff;font:400 16px/22px 'Open Sans','Noto Sans CJK KR',sans-serif;color:#000;-webkit-text-stroke:.3px #000;word-spacing:3px}
    .m{display:flex;height:${d.h-18}px}.v{width:1193px;overflow:hidden;display:flex;flex-direction:column}
    .row{display:flex;height:39px;flex:none;border-bottom:1px solid #b8b8b8;box-sizing:border-box}.row.s{background:#e9e9e9}
    .row.hd{height:30px;background:#2e4066;color:#fff;-webkit-text-stroke:.2px #fff}.c{flex:none;box-sizing:border-box;border-right:1px solid #b8b8b8;display:flex;align-items:center;padding:0 3px 2px 6px;overflow:hidden}
    .hd .c{padding:0 3px 1px}
    .vs{width:17px;background:#e2e2e2;display:flex;flex-direction:column}.btn{background:#f0f0f0;border:1px solid #c4c4c4;box-sizing:border-box;display:flex;align-items:center;justify-content:center;width:17px;height:17px;flex:none}
    .th{background:#969696;flex:none}.hs{display:flex;height:16px;background:#e2e2e2}.hs .btn{height:16px}.f{flex:1}</style>
    <div class="m"><div class="v"><div class="row hd">${d.head.map((c,i)=>cell(c,i,1)).join('')}</div>
    ${d.rows.map(r=>`<div class="row ${r[0]?'':'s'}">${d.cols.map((_,i)=>cell(r[i],i)).join('')}</div>`).join('')}</div>
    <div class="vs"><div class="btn">${S(7,4,'<path d="M0 4h7L3.500 0z"/>')}</div><div class="th" style="height:${d.vt}px;margin-top:1px"></div><div class="f"></div><div class="btn">${S(7,4,'<path d="M0 0h7L3.500 4z"/>')}</div></div></div>
    <div class="hs"><div class="btn">${S(4,8,'<path d="M4 0v8L0 4z"/>')}</div><div class="th" style="width:${d.ht}px;margin-left:1px"></div><div class="f"></div><div class="btn">${S(4,8,'<path d="M0 0v8l4-4z"/>')}</div><div style="width:17px;background:#f0f0f0"></div></div>`;
  }
}
const sap=t=>[t,89],wo=t=>[t,99],mc=t=>[t,109],red='#ff5a52';
const h4=[['Sap Code',73],['작업지시 번호',101.5],['자재/제품 코드',108],['자재/제품 설명',108]];
const headA=[...h4,['투입 수량',69],['수량',31],['불량 수량',69],['차수',31],['수율',31]];
const headB=[...h4,['자재 코드',69],['투입 자재 명',91],['투',15,'flex-start']];
const sub=['',['소계',31],'',''];
const n5=t=>[t,48,'r'],n4=t=>[t,40,'r'],pc=t=>[t,54,'r'];
const eti='에티카 라운드베이직 에이 KF94 블랙  ';
const doy=['도야지식품] 박수홍 착한 뼈없는 소한마리탕 750g_일반/전면_인쇄',486,'l'];
const dm=[eti+'(중형) 자동롤_일반/전면_인쇄',500,'l'],ds=[eti+'(소형)삼방파우치_일반/전면_인',509,'l'],dl=[eti+'(대형) 자동롤_일반/전면_인쇄',500,'l'];
const so=[sap('1111281600'),wo('W21823A007'),mc('11EA11281600'),ds];
const DATA={
 left:{
  a:{h:198,vt:47,ht:1112,cols:[106,115,126,517,80,62,80,42,66],head:headA,rows:[
   [sap('1111281500'),wo('W21823A009'),mc('11EA11281500'),dm,n5('30,000'),n5('30,000'),['0',9,'r'],['1 차',30],['100%',40,'r']],
   [...sub,n5('30,000'),n5('30,000'),['0',9,'r'],'',['100%',40,'r']],
   [sap('1111259700'),wo('W21823A010'),mc('11EA11259700'),doy,n5('22,000'),n5('19,950'),n4('2,050'),['1 차',30],pc('90.68%')],
   [...sub,n5('22,000'),n5('19,950'),n4('2,050'),'',pc('90.68%')]]},
  b:{h:182,vt:31,ht:1098,cols:[106,115,126,517,105,202,80],head:headB,rows:[
   [sap('1111281500'),wo('W21823A009'),mc('11EA11281500'),dm,['6153110356',90],['PET(양면) 16㎛ × 690㎜',180,'l']],
   [...sub],
   [sap('1111259700'),wo('W21823A010'),mc('11EA11259700'),doy,['6110210023',90,'',red],['PET (양면)12 ㎛ x 620 ㎜',190,'l',red]],
   [sap('1111259700'),wo('W21823A010'),mc('11EA11259700'),doy,['6110200020',90,'',red],['PET 12㎛ x 680㎜',138,'l',red]]]}
 },
 right:{
  a:{h:198,vt:61,ht:1101,cols:[106,115,126,528,80,62,80,42,66],head:headA,rows:[
   [...so,n5('21,500'),n5('18,000'),n4('3,500'),['1 차',30],pc('83.72%')],
   [...sub,n5('21,500'),n5('18,000'),n4('3,500'),'',pc('83.72%')],
   [sap('1111281400'),wo('W21823A008'),mc('11EA11281400'),dl,n5('33,700'),n5('33,000'),['700',26,'r'],['1 차',30],pc('97.92%')],
   [...sub,n5('33,700'),n5('33,000'),['700',26,'r'],'',pc('97.92%')]]},
  b:{h:182,vt:34,ht:1096,cols:[106,115,126,528,105,193,80],head:headB,rows:[
   [...so,['6110412964',90,'',red],['PET 16㎛ × 930㎜',136,'l',red]],
   [...so,['6110613981',90],['PET(양면) 16㎛ × 870㎜',180,'l']],
   [...so,['6110210053',90,'',red],['PET 12㎛ × 920㎜_양',160,'l',red]],
   [...sub]]}
 }
};
customElements.define('data-grid',DataGrid);

class MesWindow extends BaseEl{
  render(){
    const k=this.getAttribute('kind'),L=k==='left';
    const gear='<path d="M11.600 1h3.800l.9 3.300 2.300 1 3-1.700 2.700 2.700-1.700 3 1 2.300 3.200.9v3l-3.200.9-1 2.300 1.700 3-2.700 2.700-3-1.700-2.300 1-.9 3.300h-3.800l-.9-3.300-2.300-1-3 1.700-2.700-2.700 1.700-3-1-2.300L.5 15.500v-3l2.900-.9 1-2.300-1.700-3 2.700-2.700 3 1.700 2.300-1z" fill="none" stroke="#fff" stroke-width="1.600" stroke-linejoin="round"/><circle cx="13.500" cy="14" r="3.300" fill="none" stroke="#fff" stroke-width="1.600"/>';
    const lab=(t,w,req)=>`<div class="lab">${T(t,w)}${req?'<span class="q">*</span>':''}</div>`;
    return `<style>
    :host{display:flex;flex-direction:column;width:1280px;height:800px;background:#2e4066;font:400 17px/21px 'Open Sans','Noto Sans CJK KR',sans-serif;color:#333;word-spacing:2px}
    .tb{height:43px;display:flex;align-items:flex-start;color:#fff;flex:none;padding:0 3px}.tb svg{flex:none}
    .main{margin:0 3px;height:719px;box-sizing:border-box;border-top:4px solid #0f84dc;background:#e4e5ea;display:flex;flex:none}
    .side{width:20px;padding-top:13px;flex:none}.tab{width:20px;height:30px;background:#0f84dc;display:flex;align-items:center;justify-content:center}
    .body{width:1254px;display:flex;flex-direction:column}
    .head{height:41px;display:flex;justify-content:space-between;flex:none;width:1242px}
    .cl{width:100px;height:18px;background:#6f6f6f;color:#fff;margin-top:21px;display:flex;align-items:center;justify-content:center;font-size:16px;line-height:18px}
    .cl fit-text{margin-top:-2px}
    .panel{background:#fff;width:1234px;flex:none}
    .form{height:129px;display:flex;padding-left:15px;box-sizing:border-box}.half{width:621px;flex:none;display:flex;flex-direction:column}.half+.half{width:598px}
    .fr{height:42px;display:flex;align-items:center}.lab{width:136px;display:flex;flex:none;-webkit-text-stroke:.15px #333}.q{color:#f0401c;-webkit-text-stroke:0;margin-left:9px;line-height:18px}
    .res{width:140px;height:40px;box-sizing:border-box;border-bottom:1px solid #cfd0d2;align-self:flex-start;margin-left:10px;padding-left:4px;display:flex;align-items:center;color:#000;font-size:16px;-webkit-text-stroke:.3px #000}
    .til{width:20px;text-align:center;font-weight:600}
    h3{margin:0;font:500 20px/28px 'Open Sans','Noto Sans CJK KR',sans-serif;-webkit-text-stroke:.35px #333;padding:1px 0 0 8px;height:37px;box-sizing:border-box}
    .btns{display:flex;height:40px;margin-top:10px;width:1234px;gap:10px}.bt{background:#0f84dc;color:#fff;width:110px;display:flex;flex-direction:column;align-items:center;justify-content:center;line-height:20px;font-size:16px;flex:none;-webkit-text-stroke:.2px #fff}
    .st{height:38px;display:flex;align-items:center;color:#fff;padding:0 19px;-webkit-text-stroke:.2px #fff}
    .u{display:flex;flex-direction:column;align-items:flex-end;margin-left:auto;margin-right:11px;padding-top:6px}
    </style>
    <div class="tb">
      ${S(26,43,'<path d="M0 13h26M0 22h26M0 31h26" stroke="#fff" stroke-width="4"/>').replace('display:block;','display:block;margin-left:12px;')}
      ${T('Nexplant',140,"font:700 29px/43px Inter,'Open Sans',sans-serif;margin-left:14px")}
      ${T('MESplus',62,"font:700 15px/43px Inter,'Open Sans',sans-serif;margin:5px 0 0 8px")}
      ${T('·',6,"font:700 18px/43px 'Open Sans',sans-serif;margin:4px 0 0 4px")}
      ${T('Operator Interface',133,"font:600 16.5px/43px 'Noto Sans','Open Sans',sans-serif;word-spacing:0;margin:4px 0 0 3px")}
      <div class="u">${T('진천 [1220]',63,'font-size:13px;line-height:17px')}${M('손수연 / syson',109,'font-size:16px;line-height:19px')}</div>
      <div style="width:95px;height:40px;margin-top:3px;background:#0f84dc;display:flex;align-items:center;box-sizing:border-box;padding-left:11px;gap:20px">${S(27,28,gear)}${S(24,28,'<path d="M14 8V1H1.500v26H14v-7" fill="none" stroke="#fff" stroke-width="1.800"/><path d="M6 14h17M17 8.500l6 5.500-6 5.500" fill="none" stroke="#fff" stroke-width="1.800"/>')}</div>
      <div style="display:flex;align-items:center;height:46px;margin-left:15px">${S(20,28,'<path d="M0 14h20" stroke="#fff" stroke-width="2.500"/>')}<i style="width:17px"></i>${S(27,28,'<path d="M1 9V1.500h8M18 1.500h8V9M26 19v7.500h-8M9 26.500H1V19M2 2.500l8 8M25 2.500l-8 8M25 25.500l-8-8M2 25.500l8-8" fill="none" stroke="#fff" stroke-width="2"/>')}<i style="width:14px"></i>${S(23,28,'<path d="M1 3l21 22M22 3L1 25" stroke="#fff" stroke-width="1.800"/>')}<i style="width:14px"></i></div>
    </div>
    <div class="main"><div class="side"><div class="tab">${S(9,14,'<path d="M1.500 1.500L6.500 7l-5 5.500" fill="none" stroke="#fff" stroke-width="3"/>')}</div></div>
     <div class="body">
      <div class="head">${T('작업일보',113,"font:700 30px/32px 'Noto Sans CJK KR',sans-serif;color:#000;margin:1px 0 0 6px")}<div class="cl">${T('닫기',31)}</div></div>
      <div class="panel form">
        <div class="half">
          <div class="fr">${lab('생산 일자',69,1)}<date-input value="2021-08-24"></date-input><span class="til">~</span><date-input value="2021-08-24"></date-input></div>
          <div class="fr">${lab('공정 코드',69,1)}<code-input value="A" w="11"></code-input><div class="res">${T('인쇄',31)}</div></div>
          <div class="fr">${lab('설비',31,1)}<code-input value="122111" w="53"></code-input><div class="res">${M('인쇄 1호(진천)',105)}</div></div>
        </div>
        <div class="half">
          <div class="fr">${lab('근무조',47)}<code-input value="${L?'B':'A'}" w="11"></code-input><div class="res">${L?T('야간조',47):T('전조',31)}</div></div>
          <div class="fr">${lab('제품 코드',69)}<code-input></code-input><div class="res"></div></div>
          <div class="fr"><div class="lab" style="flex-direction:column">${T('투입 상하한치',101)}${T('초과여부',62)}</div><div style="width:22px;height:20px;border:1.500px solid #8f8f8f;box-sizing:border-box;margin-top:2px"></div></div>
        </div>
      </div>
      <div class="panel" style="margin-top:14px;height:241px"><h3>${T('작업지시 목록',119)}</h3><data-grid win="${k}" grid="a"></data-grid></div>
      <div class="panel" style="margin-top:10px;height:225px"><h3>${T('투입 정보',82)}</h3><data-grid win="${k}" grid="b"></data-grid></div>
      <div class="btns"><div class="bt" style="width:115px;margin-right:auto">${T('프린트 옵션',84)}</div>
        <div class="bt">${T('발행',31)}</div>
        <div class="bt" style="flex-direction:row;justify-content:flex-start;${L?'background:#1a99ee':''}"><div style="padding:0 8px">${S(25,24,'<path d="M14 3h10v18H14z" fill="none" stroke="#fff"/><path d="M15 7h9M15 10.500h9M15 14h9M15 17.500h9M19 3v18" stroke="#fff"/><path d="M0 2.500L14 0v24L0 21.500z" fill="#fff"/><path d="M5 8l5 8M10 8l-5 8" stroke="#0f84dc" stroke-width="1.800"/>')}</div><div style="display:flex;flex-direction:column;font-weight:600">${T('Export',50)}${T('Excel',39)}</div></div>
        <div class="bt">${T('특이사항',63)}${T('등록',31)}</div><div class="bt">${T('비가동 정보',84)}</div><div class="bt" style="width:112px">${T('조회',31)}</div></div>
     </div></div>
    <div class="st">${L?'':S(25,24,'<circle cx="12" cy="12" r="11" fill="#0f84dc" stroke="#fff" stroke-width="1.600"/><path d="M12 6v8M12 16v2.500" stroke="#fff" stroke-width="2.500"/>')+T('엑셀파일 출력이 완료되었습니다.',254,'margin-left:13px;font-size:17px')}
      <div style="margin-left:auto">${S(23,28,'<path d="M2 23q3-2 3-6v-5q0-7 6.500-8 6.500 1 6.500 8v5q0 4 3 6z" fill="none" stroke="#fff" stroke-width="1.700" stroke-linejoin="round"/><circle cx="11.500" cy="2.500" r="1.600" fill="none" stroke="#fff"/><path d="M8 24q0 3 3.500 3t3.500-3" fill="none" stroke="#fff" stroke-width="1.700"/>')}</div></div>`;
  }
}
customElements.define('mes-window',MesWindow);

/* ---------- one monitor ---------- */
class DeskScreen extends BaseEl{
  render(){
    const L=this.getAttribute('kind')==='left',k=L?'left':'right';
    return `<style>:host{display:flex;flex-direction:column;width:1920px;height:1080px;position:relative;overflow:hidden;flex:none}
    .wall{height:1040px;display:flex;overflow:hidden;flex:none;background:
      radial-gradient(ellipse 380px 420px at 1640px 470px,rgba(0,110,255,.85),rgba(0,110,255,0)),
      radial-gradient(ellipse 1500px 1300px at 0 750px,#00b6ff 0,#00aefc 22%,rgba(0,155,245,.8) 50%,rgba(0,115,228,.35) 75%,rgba(0,80,200,0)),
      linear-gradient(90deg,#00a0f6 0,#0088e8 30%,#0668d8 60%,#0850c6 85%,#0444b6 100%)}
    excel-window{position:absolute;left:260px;top:0}mes-window{position:absolute;left:320px;top:120px}</style>
    <div class="wall">${L?'<icon-grid></icon-grid>':''}</div><task-bar kind="${k}"></task-bar>
    ${L?'<excel-window></excel-window>':''}<mes-window kind="${k}"></mes-window>`;
  }
}
customElements.define('desk-screen',DeskScreen);
</script>
</body>
</html>
